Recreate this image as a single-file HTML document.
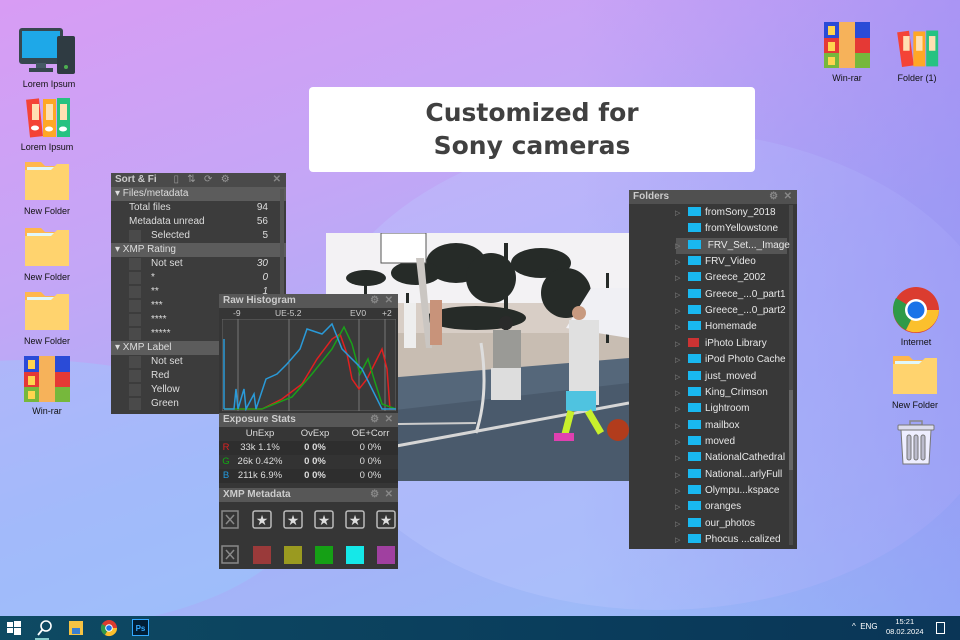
<!DOCTYPE html>
<html style="width:960px;height:640px;overflow:hidden"><head><meta charset="utf-8">
<style>
*{margin:0;padding:0;box-sizing:border-box}
html{background:#a8b4f6}
body{width:960px;height:640px;overflow:hidden;position:relative;font-family:"Liberation Sans",sans-serif;
background:linear-gradient(160deg,#d89cf4 0%,#c4a6f6 30%,#a9aef7 55%,#a0b8f8 80%,#95c6fa 100%);}
#bg{position:absolute;left:0;top:0;width:960px;height:640px;overflow:hidden}
.blob{position:absolute;border-radius:50%}
.ic{position:absolute;width:70px;text-align:center;font-size:9px;color:#111}
.ic span{display:block;margin-top:2px}
.pan{position:absolute;background:#3c3c3c;color:#ddd;font-size:10px;}
.tb{background:#575757;color:#ccc;font-weight:bold;font-size:10px;height:14px;line-height:14px;padding-left:4px;position:relative}
.tb i{position:absolute;right:5px;top:0;font-style:normal;color:#888}
.row{height:14px;line-height:14px;position:relative}
.chk{position:absolute;left:18px;top:1px;width:12px;height:12px;background:#4a4a4a}
.f{position:absolute;left:0;height:16.35px;line-height:16px;font-size:10px;color:#e8e8e8;white-space:nowrap}
.fi{display:inline-block;width:13px;height:9px;background:#19b8f0;vertical-align:-1px;margin-right:4px}
.ar{display:inline-block;width:13px;color:#888;font-size:7px}
</style></head><body>
<div id="bg">
<div class="blob" style="left:310px;top:130px;width:700px;height:480px;background:rgba(190,200,255,.35)"></div>
<div class="blob" style="left:-250px;top:360px;width:560px;height:270px;background:rgba(150,210,255,.35)"></div>
<div style="position:absolute;left:0;top:0;width:960px;height:640px;background:linear-gradient(90deg,rgba(140,120,240,0) 60%,rgba(140,120,240,.4) 100%)"></div>
</div>

<!-- left icons -->
<div class="ic" style="left:14px;top:27px">
<svg width="64" height="48" viewBox="0 0 64 48"><rect x="2" y="1" width="44" height="36" rx="3" fill="#37474f"/><rect x="5" y="4" width="38" height="27" fill="#1ea8e8"/><rect x="19" y="36" width="10" height="6" fill="#455a64"/><rect x="12" y="41" width="24" height="4" fill="#37474f"/><rect x="40" y="9" width="18" height="38" rx="2" fill="#2f3b42"/><circle cx="49" cy="40" r="2" fill="#4caf50"/></svg><span>Lorem Ipsum</span></div>
<div class="ic" style="left:12px;top:96px">
<svg width="50" height="42" viewBox="0 0 50 42"><rect x="6" y="3" width="13" height="38" fill="#f44336" transform="rotate(-6 12 22)"/><rect x="21" y="3" width="13" height="38" fill="#ffa726"/><rect x="35" y="2" width="13" height="39" fill="#26c281"/><rect x="10" y="8" width="7" height="16" fill="#ffe0b2"/><rect x="24" y="8" width="7" height="16" fill="#ffe0b2"/><rect x="38" y="8" width="7" height="16" fill="#ffe0b2"/><ellipse cx="13" cy="32" rx="4" ry="2.5" fill="#fff"/><ellipse cx="27" cy="33" rx="4" ry="2.5" fill="#fff"/><ellipse cx="41" cy="33" rx="4" ry="2.5" fill="#fff"/></svg><span>Lorem Ipsum</span></div>
<div class="ic" style="left:12px;top:158px"><svg width="48" height="44" viewBox="0 0 48 44"><path d="M2 4h16l4 4h24v34H2z" fill="#ffb74d"/><rect x="4" y="9" width="42" height="8" fill="#e0f7fa"/><path d="M2 12h26l6 -6h12v36H2z" fill="#ffd36e"/></svg><span>New Folder</span></div>
<div class="ic" style="left:12px;top:224px"><svg width="48" height="44" viewBox="0 0 48 44"><path d="M2 4h16l4 4h24v34H2z" fill="#ffb74d"/><rect x="4" y="9" width="42" height="8" fill="#e0f7fa"/><path d="M2 12h26l6 -6h12v36H2z" fill="#ffd36e"/></svg><span>New Folder</span></div>
<div class="ic" style="left:12px;top:288px"><svg width="48" height="44" viewBox="0 0 48 44"><path d="M2 4h16l4 4h24v34H2z" fill="#ffb74d"/><rect x="4" y="9" width="42" height="8" fill="#e0f7fa"/><path d="M2 12h26l6 -6h12v36H2z" fill="#ffd36e"/></svg><span>New Folder</span></div>
<div class="ic" style="left:12px;top:356px"><svg width="46" height="46" viewBox="0 0 46 46"><rect x="0" y="0" width="46" height="16" fill="#2a4bd7"/><rect x="0" y="16" width="46" height="15" fill="#e53935"/><rect x="0" y="31" width="46" height="15" fill="#76b83c"/><rect x="15" y="0" width="16" height="46" fill="#f6b25a"/><rect x="4" y="4" width="7" height="9" fill="#ffd54f"/><rect x="4" y="20" width="7" height="9" fill="#ffd54f"/><rect x="4" y="35" width="7" height="8" fill="#ffd54f"/></svg><span>Win-rar</span></div>

<!-- right icons -->
<div class="ic" style="left:812px;top:21px"><svg width="46" height="48" viewBox="0 0 46 46"><rect x="0" y="0" width="46" height="16" fill="#2a4bd7"/><rect x="0" y="16" width="46" height="15" fill="#e53935"/><rect x="0" y="31" width="46" height="15" fill="#76b83c"/><rect x="15" y="0" width="16" height="46" fill="#f6b25a"/><rect x="4" y="4" width="7" height="9" fill="#ffd54f"/><rect x="4" y="20" width="7" height="9" fill="#ffd54f"/><rect x="4" y="35" width="7" height="8" fill="#ffd54f"/></svg><span>Win-rar</span></div>
<div class="ic" style="left:882px;top:27px"><svg width="46" height="42" viewBox="0 0 50 42"><rect x="6" y="3" width="13" height="38" fill="#f44336" transform="rotate(-8 12 22)"/><rect x="21" y="3" width="13" height="38" fill="#ffa726"/><rect x="35" y="2" width="13" height="39" fill="#26c281"/><rect x="10" y="8" width="7" height="16" fill="#ffe0b2"/><rect x="24" y="8" width="7" height="16" fill="#ffe0b2"/><rect x="38" y="8" width="7" height="16" fill="#ffe0b2"/></svg><span>Folder (1)</span></div>
<div class="ic" style="left:881px;top:287px"><svg width="46" height="46" viewBox="0 0 46 46"><circle cx="23" cy="23" r="23" fill="#db3c2f"/><path d="M23 23L3 11A23 23 0 0 0 13 43z" fill="#2f9a48"/><path d="M23 23L13 43A23 23 0 0 0 46 23z" fill="#fbc02d"/><circle cx="23" cy="23" r="11" fill="#fff"/><circle cx="23" cy="23" r="8.5" fill="#1a73e8"/></svg><span>Internet</span></div>
<div class="ic" style="left:880px;top:352px"><svg width="48" height="44" viewBox="0 0 48 44"><path d="M2 4h16l4 4h24v34H2z" fill="#ffb74d"/><rect x="4" y="9" width="42" height="8" fill="#e0f7fa"/><path d="M2 12h26l6 -6h12v36H2z" fill="#ffd36e"/></svg><span>New Folder</span></div>
<div style="position:absolute;left:897px;top:420px"><svg width="38" height="46" viewBox="0 0 38 46"><rect x="13" y="1" width="12" height="4" fill="none" stroke="#888" stroke-width="1.5"/><rect x="1" y="5" width="36" height="5" rx="1" fill="#dde" stroke="#777"/><path d="M4 10h30l-2 34H6z" fill="#eef" stroke="#777"/><rect x="10" y="15" width="4" height="25" rx="2" fill="#bbc" stroke="#777"/><rect x="17" y="15" width="4" height="25" rx="2" fill="#bbc" stroke="#777"/><rect x="24" y="15" width="4" height="25" rx="2" fill="#bbc" stroke="#777"/></svg></div>

<!-- title -->
<div style="position:absolute;left:309px;top:87px;width:446px;height:85px;background:#fff;border-radius:4px;text-align:center;font-weight:bold;font-size:25px;line-height:33px;color:#404040;padding-top:9px;font-family:'DejaVu Sans','Liberation Sans',sans-serif">Customized for<br>Sony cameras</div>

<!-- photo -->
<div style="position:absolute;left:326px;top:233px;width:303px;height:248px;overflow:hidden;background:#f2f2f4">
<svg width="303" height="248" viewBox="0 0 303 248">
<rect x="0" y="0" width="303" height="70" fill="#f3f2f4"/>
<rect x="0" y="70" width="303" height="60" fill="#d8cec6"/>
<rect x="0" y="100" width="303" height="45" fill="#c8bdb2"/>
<path d="M0 150L303 125V248H0z" fill="#55677a"/>
<path d="M0 185L303 150V248H0z" fill="#4a5a6c"/>
<g fill="#262b28">
<ellipse cx="40" cy="45" rx="20" ry="8"/><rect x="38" y="45" width="3" height="60"/>
<ellipse cx="130" cy="30" rx="30" ry="20"/><ellipse cx="165" cy="45" rx="25" ry="25"/>
<ellipse cx="215" cy="30" rx="30" ry="15"/><ellipse cx="240" cy="60" rx="25" ry="25"/>
<ellipse cx="150" cy="85" rx="50" ry="12"/><rect x="178" y="10" width="4" height="90"/><rect x="280" y="40" width="3" height="70"/>
<ellipse cx="90" cy="40" rx="25" ry="12"/><rect x="80" y="60" width="3" height="40"/>
</g>
<path d="M240 95L265 55H303V105z" fill="#f0f0f4"/>
<rect x="55" y="0" width="45" height="30" fill="#fff" stroke="#555"/>
<path d="M90 25 L100 115 L106 115 L98 25z" fill="#cac6c2"/>
<path d="M150 200 Q163 160 155 110" stroke="#ddd" stroke-width="3" fill="none"/>
<path d="M0 226 L303 170" stroke="#d6d6d6" stroke-width="3"/>
<path d="M0 192 L150 190" stroke="#ccc" stroke-width="2"/>
<rect x="78" y="70" width="12" height="45" fill="#eee"/>
<rect x="104" y="67" width="12" height="45" fill="#c8937a"/>
<circle cx="180" cy="90" r="7" fill="#2a2a2a"/>
<rect x="167" y="97" width="28" height="38" fill="#9a9a96"/><rect x="165" y="135" width="30" height="32" fill="#ddd"/>
<circle cx="253" cy="80" r="7" fill="#c89a80"/>
<rect x="243" y="87" width="30" height="85" fill="#e0e0e0"/>
<rect x="240" y="158" width="30" height="20" fill="#4fc3e0"/>
<path d="M245 178L238 205M262 178L275 200" stroke="#c8f02c" stroke-width="7"/>
<circle cx="292" cy="197" r="11" fill="#b23c1c"/>
<rect x="228" y="200" width="20" height="8" fill="#e040b0"/>
</svg></div>

<!-- sort panel -->
<div class="pan" style="left:111px;top:173px;width:175px;height:241px">
<div class="tb" style="background:#4a4a4a">Sort &amp; Fi <span style="color:#999;margin-left:14px;font-weight:normal">▯ &nbsp; ⇅ &nbsp; ⟳ &nbsp; ⚙</span><i>✕</i></div>
<div class="row tb" style="font-weight:normal;color:#ddd;background:#5c5c5c">▾ Files/metadata</div>
<div class="row" style="padding-left:18px">Total files<span style="position:absolute;right:18px">94</span></div>
<div class="row" style="padding-left:18px">Metadata unread<span style="position:absolute;right:18px">56</span></div>
<div class="row" style="padding-left:40px"><b class="chk"></b>Selected<span style="position:absolute;right:18px">5</span></div>
<div class="row tb" style="font-weight:normal;color:#ddd;background:#5c5c5c">▾ XMP Rating</div>
<div class="row" style="padding-left:40px"><b class="chk"></b>Not set<span style="position:absolute;right:18px;font-style:italic">30</span></div>
<div class="row" style="padding-left:40px"><b class="chk"></b>*<span style="position:absolute;right:18px;font-style:italic">0</span></div>
<div class="row" style="padding-left:40px"><b class="chk"></b>**<span style="position:absolute;right:18px;font-style:italic">1</span></div>
<div class="row" style="padding-left:40px"><b class="chk"></b>***</div>
<div class="row" style="padding-left:40px"><b class="chk"></b>****</div>
<div class="row" style="padding-left:40px"><b class="chk"></b>*****</div>
<div class="row tb" style="font-weight:normal;color:#ddd;background:#5c5c5c">▾ XMP Label</div>
<div class="row" style="padding-left:40px"><b class="chk"></b>Not set</div>
<div class="row" style="padding-left:40px"><b class="chk"></b>Red</div>
<div class="row" style="padding-left:40px"><b class="chk"></b>Yellow</div>
<div class="row" style="padding-left:40px"><b class="chk"></b>Green</div>
<div style="position:absolute;right:2px;top:16px;width:4px;height:210px;background:#555"></div>
</div>

<!-- histogram panel -->
<div class="pan" style="left:219px;top:294px;width:179px;height:275px;background:#363636">
<div class="tb">Raw Histogram<i>⚙ &nbsp;✕</i></div>
<div style="position:relative;height:11px;font-size:8.5px;color:#ccc"><span style="position:absolute;left:14px">-9</span><span style="position:absolute;left:56px">UE-5.2</span><span style="position:absolute;left:131px">EV0</span><span style="position:absolute;left:163px">+2</span></div>
<svg style="position:absolute;left:3px;top:25px" width="174" height="92" viewBox="0 0 174 92">
<rect x="0" y="0" width="174" height="92" fill="#3a3a3a" stroke="#666"/>
<path d="M16 0V92M67 0V92M137 0V92M163 0V92" stroke="#777"/>
<path d="M2 90H40L60 80L80 65L95 40L110 20L118 15L125 35L130 60L137 70L145 60L155 40L160 30L165 50L168 90H174" stroke="#e02020" stroke-width="1.5" fill="none"/>
<path d="M2 90H40L70 78L90 55L110 30L122 8L130 25L138 55L146 40L152 60L160 85L174 90" stroke="#1aa01a" stroke-width="1.5" fill="none"/>
<path d="M2 90V20M2 90H12L14 70L16 90L22 70L24 90L32 75L34 90L40 72L44 60L55 55L65 45L78 30L85 10L100 15L110 5L120 30L130 40L140 50L150 70L160 90H174" stroke="#2a9ad8" stroke-width="1.5" fill="none"/>
</svg>
<div style="position:absolute;top:119px;left:0;right:0">
<div class="tb">Exposure Stats<i>⚙ &nbsp;✕</i></div>
<div style="display:flex;height:14px;line-height:14px;font-size:9.5px;text-align:center"><span style="width:14px"></span><span style="width:54px">UnExp</span><span style="width:56px">OvExp</span><span style="width:55px">OE+Corr</span></div>
<div style="display:flex;height:14px;line-height:14px;font-size:9.5px;text-align:center;background:#2e2e2e"><span style="width:14px;color:#d22">R</span><span style="width:54px">33k 1.1%</span><b style="width:56px">0 0%</b><span style="width:55px">0 0%</span></div>
<div style="display:flex;height:14px;line-height:14px;font-size:9.5px;text-align:center;background:#333"><span style="width:14px;color:#1a1">G</span><span style="width:54px">26k 0.42%</span><b style="width:56px">0 0%</b><span style="width:55px">0 0%</span></div>
<div style="display:flex;height:14px;line-height:14px;font-size:9.5px;text-align:center;background:#2e2e2e"><span style="width:14px;color:#29d">B</span><span style="width:54px">211k 6.9%</span><b style="width:56px">0 0%</b><span style="width:55px">0 0%</span></div>
</div>
<div style="position:absolute;top:194px;left:0;right:0">
<div class="tb">XMP Metadata<i>⚙ &nbsp;✕</i></div>
<svg width="179" height="70" viewBox="0 0 179 70">
<g fill="none" stroke="#888" stroke-width="1.5"><rect x="3" y="9" width="16" height="17"/><path d="M7 13l8 9M15 13l-8 9"/><rect x="3" y="44" width="16" height="17"/><path d="M7 48l8 9M15 48l-8 9"/></g>
<g stroke="#bbb" stroke-width="1.5" fill="none"><rect x="34" y="9" width="18" height="17" rx="2"/><rect x="65" y="9" width="18" height="17" rx="2"/><rect x="96" y="9" width="18" height="17" rx="2"/><rect x="127" y="9" width="18" height="17" rx="2"/><rect x="158" y="9" width="18" height="17" rx="2"/></g>
<g fill="#ddd" font-size="14" text-anchor="middle"><text x="43" y="23">★</text><text x="74" y="23">★</text><text x="105" y="23">★</text><text x="136" y="23">★</text><text x="167" y="23">★</text></g>
<rect x="34" y="44" width="18" height="18" fill="#9a3a3a"/><rect x="65" y="44" width="18" height="18" fill="#9a9a20"/><rect x="96" y="44" width="18" height="18" fill="#15a015"/><rect x="127" y="44" width="18" height="18" fill="#15e8e8"/><rect x="158" y="44" width="18" height="18" fill="#a040a0"/>
</svg></div>
</div>

<!-- folders panel -->
<div class="pan" style="left:629px;top:190px;width:168px;height:359px;background:#383838">
<div class="tb" style="background:#505050">Folders<i>⚙ &nbsp;✕</i></div>
<div style="position:absolute;left:47px;top:48px;width:111px;height:16px;background:#555"></div>
<div style="position:absolute;left:160px;top:15px;width:4px;height:340px;background:#4a4a4a"></div>
<div style="position:absolute;left:160px;top:200px;width:4px;height:80px;background:#666"></div>
<div style="position:absolute;left:46px;top:15px">
<div class="f" style="top:0"><span class="ar">▷</span><span class="fi"></span>fromSony_2018</div>
<div class="f" style="top:16.35px"><span class="ar"></span><span class="fi"></span>fromYellowstone</div>
<div class="f" style="top:32.7px"><span class="ar">▷</span><span class="fi"></span>&nbsp;FRV_Set..._Image</div>
<div class="f" style="top:49.05px"><span class="ar">▷</span><span class="fi"></span>FRV_Video</div>
<div class="f" style="top:65.4px"><span class="ar">▷</span><span class="fi"></span>Greece_2002</div>
<div class="f" style="top:81.75px"><span class="ar">▷</span><span class="fi"></span>Greece_...0_part1</div>
<div class="f" style="top:98.1px"><span class="ar">▷</span><span class="fi"></span>Greece_...0_part2</div>
<div class="f" style="top:114.45px"><span class="ar">▷</span><span class="fi"></span>Homemade</div>
<div class="f" style="top:130.8px"><span class="ar">▷</span><span class="fi" style="background:#c33;width:11px;margin-right:6px"></span>iPhoto Library</div>
<div class="f" style="top:147.15px"><span class="ar">▷</span><span class="fi"></span>iPod Photo Cache</div>
<div class="f" style="top:163.5px"><span class="ar">▷</span><span class="fi"></span>just_moved</div>
<div class="f" style="top:179.85px"><span class="ar">▷</span><span class="fi"></span>King_Crimson</div>
<div class="f" style="top:196.2px"><span class="ar">▷</span><span class="fi"></span>Lightroom</div>
<div class="f" style="top:212.55px"><span class="ar">▷</span><span class="fi"></span>mailbox</div>
<div class="f" style="top:228.9px"><span class="ar">▷</span><span class="fi"></span>moved</div>
<div class="f" style="top:245.25px"><span class="ar">▷</span><span class="fi"></span>NationalCathedral</div>
<div class="f" style="top:261.6px"><span class="ar">▷</span><span class="fi"></span>National...arlyFull</div>
<div class="f" style="top:277.95px"><span class="ar">▷</span><span class="fi"></span>Olympu...kspace</div>
<div class="f" style="top:294.3px"><span class="ar">▷</span><span class="fi"></span>oranges</div>
<div class="f" style="top:310.65px"><span class="ar">▷</span><span class="fi"></span>our_photos</div>
<div class="f" style="top:327px"><span class="ar">▷</span><span class="fi"></span>Phocus ...calized</div>
</div></div>

<!-- taskbar -->
<div style="position:absolute;left:0;top:616px;width:960px;height:24px;background:linear-gradient(90deg,#0e4a63,#0a3d5c 60%,#0a3556)">
<svg style="position:absolute;left:7px;top:5px" width="14" height="14"><rect x="0" y="1" width="6" height="5" fill="#fff"/><rect x="7" y="0" width="7" height="6" fill="#fff"/><rect x="0" y="7" width="6" height="5" fill="#fff"/><rect x="7" y="7" width="7" height="7" fill="#fff"/></svg>
<svg style="position:absolute;left:37px;top:4px" width="16" height="16"><circle cx="9" cy="6" r="5" fill="none" stroke="#fff" stroke-width="1.6"/><path d="M5.5 9.5L1 15" stroke="#fff" stroke-width="1.8"/></svg>
<svg style="position:absolute;left:68px;top:4px" width="16" height="16"><rect x="1" y="1" width="14" height="14" fill="#f6c343"/><rect x="4" y="8" width="8" height="6" fill="#3b7ed0"/></svg>
<svg style="position:absolute;left:100px;top:3px" width="18" height="18"><circle cx="9" cy="9" r="8" fill="#db3c2f"/><path d="M9 9L2 5A8 8 0 0 0 5 16z" fill="#2f9a48"/><path d="M9 9L5 16A8 8 0 0 0 17 9z" fill="#fbc02d"/><circle cx="9" cy="9" r="3.8" fill="#fff"/><circle cx="9" cy="9" r="2.8" fill="#1a73e8"/></svg>
<div style="position:absolute;left:132px;top:3px;width:17px;height:17px;background:#001e36;color:#31a8ff;font-size:8px;font-weight:bold;text-align:center;line-height:17px;border:1px solid #31a8ff">Ps</div>
<div style="position:absolute;left:35px;bottom:0;width:14px;height:2px;background:#8cc"></div>
<div style="position:absolute;left:852px;top:6px;color:#fff;font-size:8px">^ &nbsp;ENG</div>
<div style="position:absolute;left:886px;top:1px;color:#fff;font-size:7.5px;text-align:center;line-height:10px">15:21<br>08.02.2024</div>
<div style="position:absolute;left:936px;top:6px;width:9px;height:12px;border:1px solid #fff"></div>
</div>
</body></html>
